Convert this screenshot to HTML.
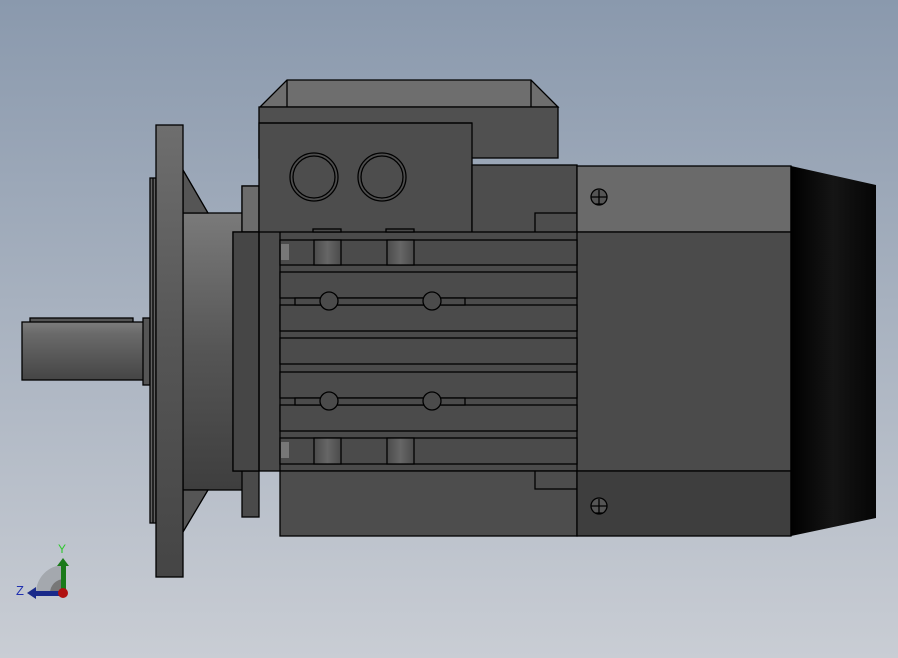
<!DOCTYPE html>
<html><head><meta charset="utf-8"><style>html,body{margin:0;padding:0;width:898px;height:658px;overflow:hidden}</style></head>
<body>
<svg width="898" height="658" viewBox="0 0 898 658" xmlns="http://www.w3.org/2000/svg" stroke="#000" stroke-width="1.3">
<defs>
<linearGradient id="bg" x1="0" y1="0" x2="0" y2="1"><stop offset="0" stop-color="#8a99ad"/><stop offset="1" stop-color="#c9cdd4"/></linearGradient>
<linearGradient id="hous" x1="0" y1="0" x2="0" y2="1"><stop offset="0" stop-color="#7a7a7a"/><stop offset="0.5" stop-color="#555"/><stop offset="1" stop-color="#3e3e3e"/></linearGradient>
<linearGradient id="fl" x1="0" y1="0" x2="0" y2="1"><stop offset="0" stop-color="#6e6e6e"/><stop offset="0.5" stop-color="#555"/><stop offset="1" stop-color="#454545"/></linearGradient>
<linearGradient id="sh" x1="0" y1="0" x2="0" y2="1"><stop offset="0" stop-color="#7d7d7d"/><stop offset="0.2" stop-color="#6a6a6a"/><stop offset="1" stop-color="#454545"/></linearGradient>
<linearGradient id="fan" x1="0" y1="0" x2="1" y2="0"><stop offset="0" stop-color="#000"/><stop offset="0.5" stop-color="#151515"/><stop offset="1" stop-color="#050505"/></linearGradient>
<linearGradient id="cyl" x1="0" y1="0" x2="1" y2="0"><stop offset="0" stop-color="#4b4b4b"/><stop offset="0.5" stop-color="#666"/><stop offset="1" stop-color="#4b4b4b"/></linearGradient>
</defs>
<rect width="898" height="658" fill="url(#bg)" stroke="none"/>
<!-- shaft -->
<rect x="30" y="318" width="103" height="6" fill="#555"/>
<rect x="22" y="322" width="122" height="58" fill="url(#sh)"/>
<rect x="143" y="318" width="7" height="67" fill="#555"/>
<!-- thin plates -->
<rect x="150" y="178" width="6" height="345" fill="#606060"/>
<line x1="153" y1="178" x2="153" y2="523"/>
<!-- housing -->
<rect x="183" y="213" width="60" height="277" fill="url(#hous)"/>
<polygon points="183,170 208,213 183,213" fill="#555"/>
<polygon points="183,490 208,490 183,532" fill="#555"/>
<!-- flange -->
<rect x="156" y="125" width="27" height="452" fill="url(#fl)"/>
<!-- small block -->
<rect x="242" y="186" width="17" height="331" fill="#4a4a4a"/>
<rect x="242" y="186" width="17" height="46" fill="#6c6c6c"/>
<!-- terminal box lid -->
<polygon points="287,80 531,80 558,107 260,107" fill="#6e6e6e"/>
<line x1="287" y1="80" x2="287" y2="107"/><line x1="531" y1="80" x2="531" y2="107"/>
<rect x="259" y="107" width="299" height="51" fill="#505050"/>
<rect x="259" y="123" width="213" height="110" fill="#4d4d4d"/>
<rect x="472" y="165" width="105" height="68" fill="#4d4d4d"/>
<line x1="259" y1="123" x2="472" y2="123"/>
<circle cx="314" cy="177" r="24" fill="none"/><circle cx="314" cy="177" r="21" fill="none"/>
<circle cx="382" cy="177" r="24" fill="none"/><circle cx="382" cy="177" r="21" fill="none"/>
<polyline points="535,232 535,213 577,213" fill="none"/>
<!-- top right panel -->
<rect x="577" y="166" width="214" height="66" fill="#6a6a6a"/>
<!-- main body -->
<rect x="233" y="232" width="558" height="239" fill="#4b4b4b"/>
<rect x="233" y="232" width="26" height="239" fill="#464646"/>
<line x1="259" y1="232" x2="259" y2="471"/><line x1="280" y1="232" x2="280" y2="471"/><line x1="577" y1="232" x2="577" y2="471"/>
<!-- fins -->
<g fill="#4b4b4b">
<rect x="280" y="240" width="297" height="25"/>
<rect x="280" y="272" width="297" height="26"/>
<rect x="280" y="305" width="297" height="26"/>
<rect x="280" y="338" width="297" height="26"/>
<rect x="280" y="372" width="297" height="26"/>
<rect x="280" y="405" width="297" height="26"/>
<rect x="280" y="438" width="297" height="26"/>
</g>
<g fill="url(#cyl)">
<rect x="314" y="240" width="27" height="25"/><rect x="387" y="240" width="27" height="25"/>
<rect x="314" y="438" width="27" height="26"/><rect x="387" y="438" width="27" height="26"/>
</g>
<rect x="313" y="229" width="28" height="3" fill="#4b4b4b"/><rect x="386" y="229" width="28" height="3" fill="#4b4b4b"/>
<g fill="#4b4b4b">
<rect x="295" y="298" width="170" height="7"/><rect x="295" y="398" width="170" height="7"/>
<circle cx="329" cy="301" r="9"/><circle cx="432" cy="301" r="9"/>
<circle cx="329" cy="401" r="9"/><circle cx="432" cy="401" r="9"/>
</g>
<rect x="281" y="244" width="8" height="16" fill="#777" stroke="none"/>
<rect x="281" y="442" width="8" height="16" fill="#777" stroke="none"/>
<!-- bottom panels -->
<rect x="280" y="471" width="297" height="65" fill="#4d4d4d"/>
<polyline points="535,471 535,489 577,489" fill="none"/>
<rect x="577" y="471" width="214" height="65" fill="#3e3e3e"/>
<!-- screws -->
<g fill="#555"><circle cx="599" cy="197" r="8"/><circle cx="599" cy="506" r="8"/></g>
<path d="M591,197 H607 M599,190 V204 M595,204 H603 M591,506 H607 M599,499 V513 M595,513 H603" fill="none"/>
<!-- fan cover -->
<polygon points="791,166 876,185 876,518 791,536" fill="url(#fan)" stroke="none"/>
<line x1="791" y1="166" x2="791" y2="536"/>
<!-- triad -->
<g stroke="none">
<path d="M36,593 A28,28 0 0 1 64,565 L64,593 Z" fill="#a4a8ae"/>
<path d="M50,593 A14,14 0 0 1 64,579 L64,593 Z" fill="#777"/>
<rect x="61" y="565" width="5" height="25" fill="#1a7a1a"/>
<polygon points="57,566 63,558 69,566" fill="#1a7a1a"/>
<rect x="35" y="591" width="26" height="5" fill="#1a2a8a"/>
<polygon points="36,587 27,593 36,599" fill="#1a2a8a"/>
<circle cx="63" cy="593" r="5" fill="#b01010"/>
<text x="58" y="553" font-family="Liberation Sans, sans-serif" font-size="12" fill="#2ec82e">Y</text>
<text x="16" y="595" font-family="Liberation Sans, sans-serif" font-size="13" fill="#2030b0">Z</text>
</g>
</svg>
</body></html>
